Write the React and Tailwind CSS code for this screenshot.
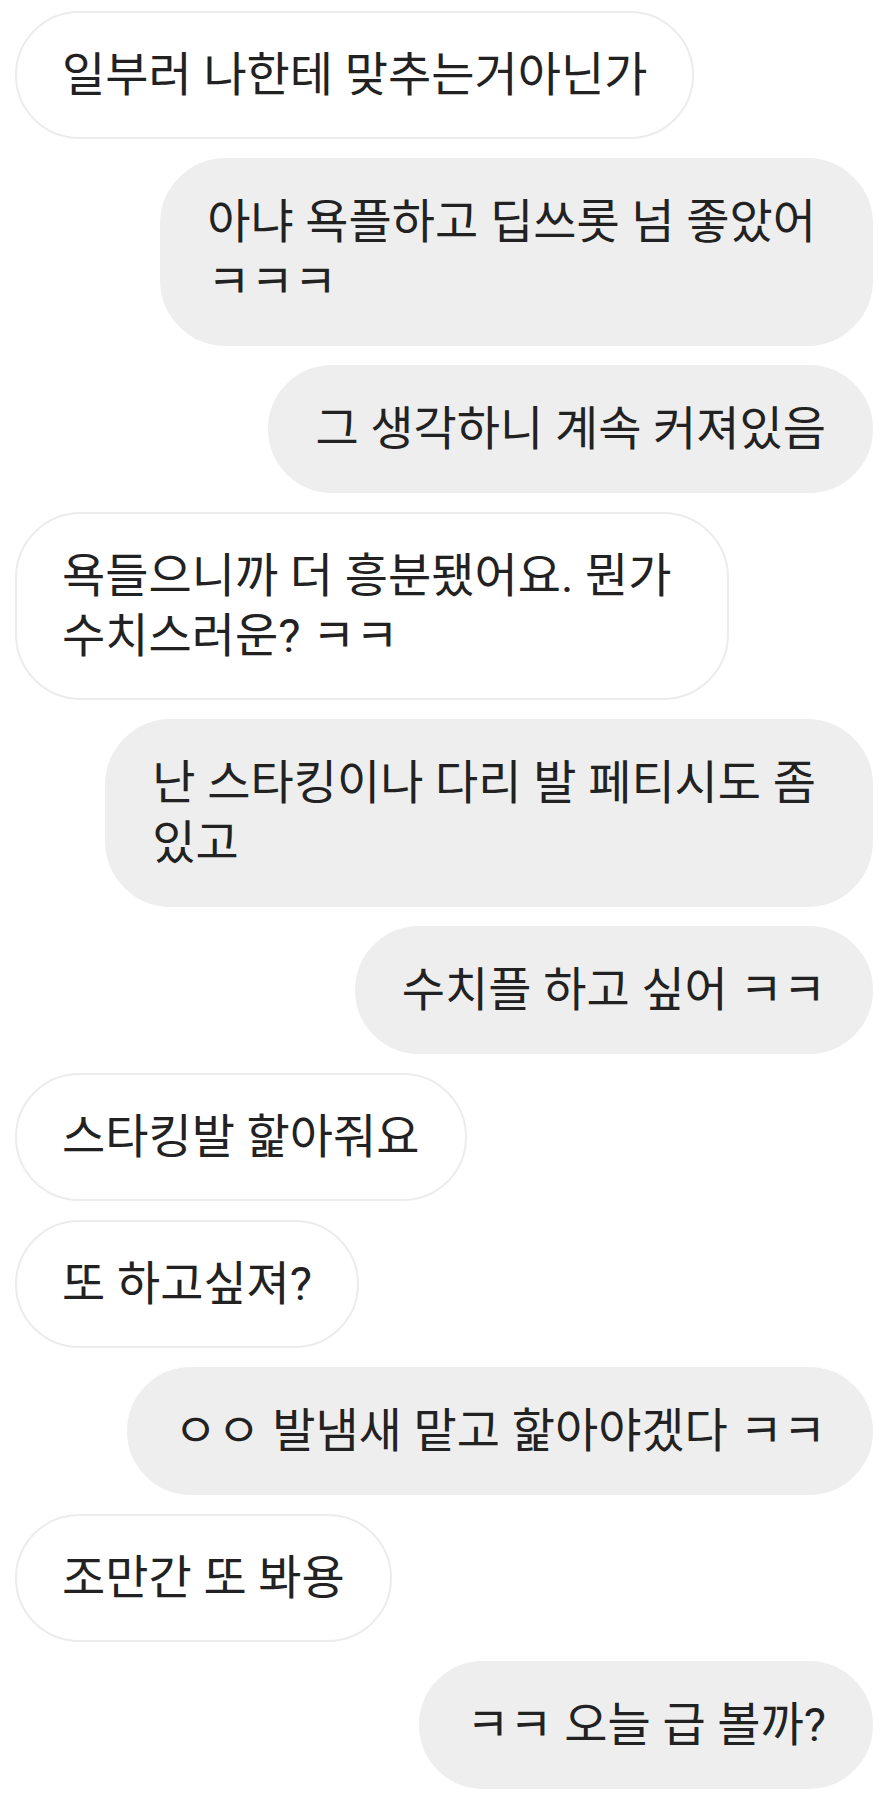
const messages = [
  { side: 'left', lines: ['일부러 나한테 맞추는거아닌가'] },
  { side: 'right', lines: ['아냐 욕플하고 딥쓰롯 넘 좋았어', 'ㅋㅋㅋ'] },
  { side: 'right', lines: ['그 생각하니 계속 커져있음'] },
  { side: 'left', lines: ['욕들으니까 더 흥분됐어요. 뭔가', '수치스러운? ㅋㅋ'] },
  { side: 'right', lines: ['난 스타킹이나 다리 발 페티시도 좀', '있고'] },
  { side: 'right', lines: ['수치플 하고 싶어 ㅋㅋ'] },
  { side: 'left', lines: ['스타킹발 핥아줘요'] },
  { side: 'left', lines: ['또 하고싶져?'] },
  { side: 'right', lines: ['ㅇㅇ 발냄새 맡고 핥아야겠다 ㅋㅋ'] },
  { side: 'left', lines: ['조만간 또 봐용'] },
  { side: 'right', lines: ['ㅋㅋ 오늘 급 볼까?'] },
];

const Bubble = ({ side, lines }) => {
  const wrapped = lines.length > 1;
  return (
    <div className={`flex ${side === 'right' ? 'justify-end pr-[5px]' : 'justify-start pl-[15px]'}`}>
      <div
        className={`rounded-[66px] border-2 py-[32px] pl-[45px] ${wrapped ? 'pr-[55px]' : 'pr-[45px]'} ${
          side === 'right' ? 'bg-[#eeeeee] border-[#eeeeee]' : 'bg-white border-[#ececec]'
        } text-[47px] leading-[60px] text-[#222222] whitespace-nowrap`}
      >
        {lines.map((line, i) => (
          <div key={i}>{line}</div>
        ))}
      </div>
    </div>
  );
};

export default function App() {
  return (
    <div
      className="min-h-[1809px] w-[878px] bg-white pt-[11px] flex flex-col gap-[19px]"
      style={{ fontFamily: 'Roboto, "Noto Sans CJK KR", sans-serif' }}
    >
      {messages.map((m, i) => (
        <Bubble key={i} side={m.side} lines={m.lines} />
      ))}
    </div>
  );
}
